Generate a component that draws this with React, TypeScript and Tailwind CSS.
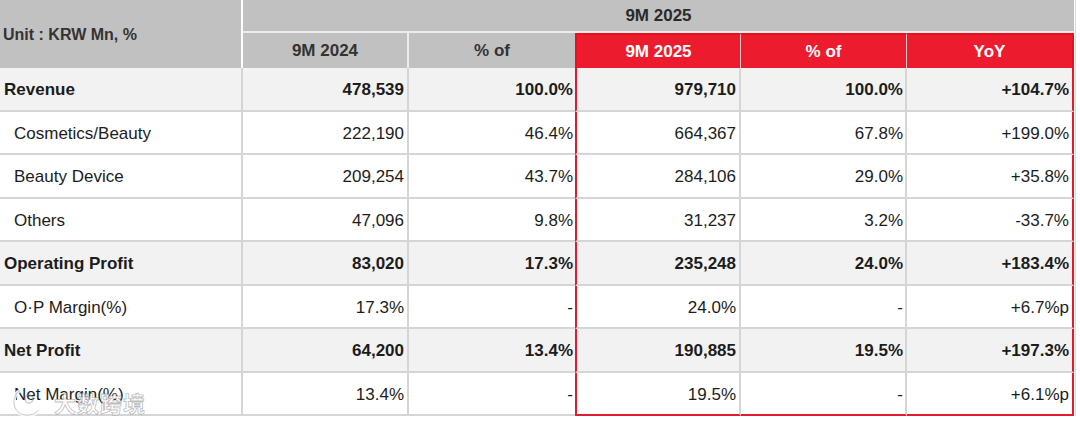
import React from "react";

type Row = { label: string; bold: boolean; v: string[] };

const rows: Row[] = [
  { label: "Revenue", bold: true, v: ["478,539", "100.0%", "979,710", "100.0%", "+104.7%"] },
  { label: "Cosmetics/Beauty", bold: false, v: ["222,190", "46.4%", "664,367", "67.8%", "+199.0%"] },
  { label: "Beauty Device", bold: false, v: ["209,254", "43.7%", "284,106", "29.0%", "+35.8%"] },
  { label: "Others", bold: false, v: ["47,096", "9.8%", "31,237", "3.2%", "-33.7%"] },
  { label: "Operating Profit", bold: true, v: ["83,020", "17.3%", "235,248", "24.0%", "+183.4%"] },
  { label: "O·P Margin(%)", bold: false, v: ["17.3%", "-", "24.0%", "-", "+6.7%p"] },
  { label: "Net Profit", bold: true, v: ["64,200", "13.4%", "190,885", "19.5%", "+197.3%"] },
  { label: "Net Margin(%)", bold: false, v: ["13.4%", "-", "19.5%", "-", "+6.1%p"] },
];

const cols = "grid grid-cols-[243px_166px_166px_166px_166px_167px]";

export default function App() {
  return (
    <div
      className="relative w-[1080px] h-[422px] bg-white overflow-hidden text-[#1c1c1c]"
      style={{ fontFamily: '"Liberation Sans", Arial, sans-serif' }}
    >
      <div className="w-[1076px] border-r border-r-[#dcdcdc]">
        {/* header */}
        <div className={`${cols} grid-rows-[33px_35px]`}>
          <div className="row-span-2 bg-[#c1c1c1] border-r-2 border-white flex items-center pl-[3px] pt-[1px] text-[16px] font-bold text-[#333]">
            Unit : KRW Mn, %
          </div>
          <div className="col-span-5 bg-[#c1c1c1] border-b-2 border-[#ececec] flex items-center justify-center text-[17px] font-bold text-[#2a2a2a] pt-[1px]">
            9M 2025
          </div>
          <div className="bg-[#c1c1c1] border-r-2 border-[#ececec] flex items-center justify-center text-[17px] font-bold text-[#333]">
            9M 2024
          </div>
          <div className="bg-[#c1c1c1] flex items-center justify-center text-[17px] font-bold text-[#333]">
            % of
          </div>
          <div className="bg-[#ec1c2e] border-l-2 border-t-2 border-r border-[#e8101f] border-r-[#f6c9cd] flex items-center justify-center text-[17px] font-bold text-white">
            9M 2025
          </div>
          <div className="bg-[#ec1c2e] border-t-2 border-[#e8101f] border-r border-r-[#f6c9cd] flex items-center justify-center text-[17px] font-bold text-white">
            % of
          </div>
          <div className="bg-[#ec1c2e] border-t-2 border-r-2 border-[#e8101f] flex items-center justify-center text-[17px] font-bold text-white">
            YoY
          </div>
        </div>
        {/* body */}
        {rows.map((r, i) => {
          const last = i === rows.length - 1;
          const bg = r.bold ? "bg-[#f2f2f2]" : "bg-white";
          const fw = r.bold ? "font-bold" : "font-normal";
          const bb = "border-b-2 border-b-[#d5d5d5]";
          const redB = last ? "border-b-2 border-b-[#e01b2c]" : bb;
          return (
            <div key={r.label} className={`${cols} h-[43.5px] ${bg} text-[17px] ${fw}`}>
              <div className={`flex items-center pt-[2px] ${r.bold ? "pl-[4px]" : "pl-[14px]"} border-r-2 border-r-[#d5d5d5] ${bb}`}>
                {r.label}
              </div>
              <div className={`flex items-center justify-end pt-[2px] pr-[3px] border-r-2 border-r-[#d5d5d5] ${bb}`}>
                {r.v[0]}
              </div>
              <div className={`flex items-center justify-end pt-[2px] pr-[2px] ${bb}`}>{r.v[1]}</div>
              <div className={`flex items-center justify-end pt-[2px] pr-[3px] border-l-2 border-l-[#e01b2c] border-r-2 border-r-[#d5d5d5] ${redB}`}>
                {r.v[2]}
              </div>
              <div className={`flex items-center justify-end pt-[2px] pr-[2px] border-r-2 border-r-[#d5d5d5] ${redB}`}>
                {r.v[3]}
              </div>
              <div className={`flex items-center justify-end pt-[2px] pr-[3px] border-r-2 border-r-[#e01b2c] ${redB}`}>
                {r.v[4]}
              </div>
            </div>
          );
        })}
      </div>
      {/* watermark */}
      <div className="absolute left-[10px] top-[386px] flex items-center gap-[8px] pointer-events-none">
        <svg width="36" height="30" viewBox="0 0 36 30">
          <path
            d="M8 4 C3 8 2 18 8 24 C14 29 24 28 29 22"
            fill="none"
            stroke="rgba(255,255,255,0.85)"
            strokeWidth="4"
            strokeLinecap="round"
          />
          <path
            d="M8 4 C3 8 2 18 8 24 C14 29 24 28 29 22"
            fill="none"
            stroke="rgba(150,150,150,0.5)"
            strokeWidth="1"
            strokeLinecap="round"
          />
          <circle cx="19" cy="11" r="4" fill="none" stroke="rgba(150,150,150,0.5)" strokeWidth="1.5" />
        </svg>
        <span
          className="text-[22px] font-bold text-white/80 tracking-[1px] [-webkit-text-stroke:0.8px_rgba(130,130,130,0.55)]"
          style={{ fontFamily: '"Noto Sans CJK SC", sans-serif' }}
        >
          大数跨境
        </span>
      </div>
    </div>
  );
}
